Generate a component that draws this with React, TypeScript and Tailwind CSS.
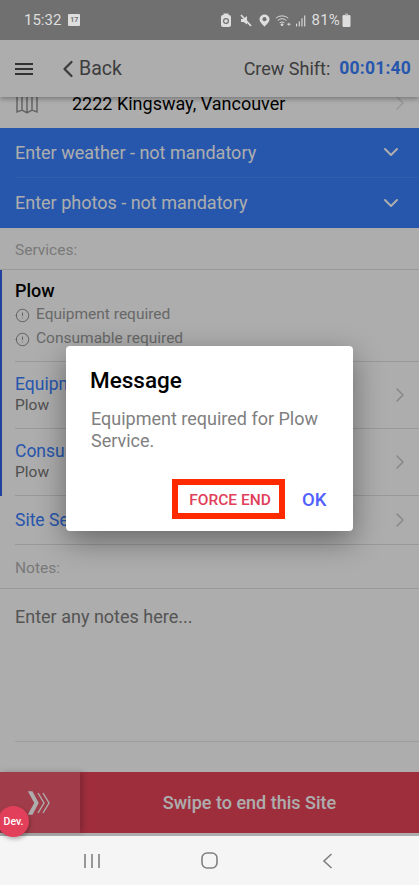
import { ChevronDown, ChevronLeft, ChevronRight, Info } from "lucide-react";

function StatusIcons() {
  return (
    <div className="flex items-center gap-[5px] text-[#dedede]">
      <svg width="10" height="14" viewBox="0 0 10 14"><rect x="0" y="2" width="10" height="12" rx="2" fill="#dedede" /><rect x="2.5" y="0.5" width="5" height="3" fill="#dedede" /><circle cx="5" cy="8" r="2.4" fill="none" stroke="#707070" strokeWidth="1.2" /></svg>
      <svg width="12" height="13" viewBox="0 0 12 13" className="ml-[4px]"><path d="M1 5h2.5L7 2v8.5L3.5 8H1z" fill="#dedede" /><path d="M1 1l10 11" stroke="#dedede" strokeWidth="1.8" /></svg>
      <svg width="11" height="13" viewBox="0 0 12 14" className="ml-[2px]"><path d="M6 0.5a5.5 5 0 0 1 5.5 5c0 3.4-5.5 8-5.5 8s-5.5-4.6-5.5-8a5.5 5 0 0 1 5.5-5z" fill="#dedede" /><circle cx="6" cy="5.5" r="2.2" fill="#707070" /></svg>
      <svg width="16" height="14" viewBox="0 0 17 14" fill="none" stroke="#dedede" strokeWidth="1"><path d="M1 5a10 10 0 0 1 13 0M3 7.5a7 7 0 0 1 9 0M5 10a4 4 0 0 1 5 0" /><circle cx="7.5" cy="12" r="1" fill="#dedede" /><path d="M13 11.5h3.5M14.8 10v3" /></svg>
      <svg width="10" height="13" viewBox="0 0 11 13" fill="#dedede"><rect x="0" y="10" width="1.2" height="3" /><rect x="3" y="7.5" width="1.2" height="5.5" /><rect x="6" y="4" width="1.2" height="9" /><rect x="9" y="1" width="1.2" height="12" /></svg>
      <span className="ml-[1px] text-[15px] leading-none tracking-[0.2px]">81%</span>
      <svg width="9" height="14" viewBox="0 0 9 14" className="-ml-[3px]"><rect x="0.5" y="2" width="8" height="12" rx="1.2" fill="#dedede" /><rect x="3" y="0.5" width="3" height="2" fill="#b0b0b0" /></svg>
    </div>
  );
}

function LinkRow({ title, sub, h }: { title: string; sub?: string; h: string }) {
  return (
    <div className={`flex ${h} items-center justify-between border-b border-[#e2e2e2] pr-[7px]`}>
      <div className={`leading-[21px] ${sub ? "" : "pt-[1px]"}`}>
        <div className="text-[17.5px] text-[#3880ff]">{title}</div>
        {sub && <div className="text-[15.5px] text-[#767676]">{sub}</div>}
      </div>
      <ChevronRight size={24} strokeWidth={1.5} className="text-[#c8c8c8]" />
    </div>
  );
}

function Req({ text }: { text: string }) {
  return (
    <div className="flex h-[24px] items-center gap-[6px] text-[15.5px] text-[#9a9a9a]">
      <Info size={15} strokeWidth={1.5} className="rotate-180 text-[#8a8a8a]" />
      <span>{text}</span>
    </div>
  );
}

function BlueRow({ text, border }: { text: string; border?: boolean }) {
  return (
    <div className="pl-[15px]">
      <div className={`flex h-[50px] items-center justify-between pb-[1px] pr-[16px] ${border ? "border-b border-[#4a8cff]" : ""}`}>
        <span className="text-[18px] text-white">{text}</span>
        <ChevronDown size={24} strokeWidth={2} className="text-white" />
      </div>
    </div>
  );
}

export default function App() {
  return (
    <div className="relative flex h-[885px] w-[419px] flex-col overflow-hidden bg-[#f5f5f5] font-['Roboto',sans-serif]">
      <div className="flex h-[836px] flex-col bg-white">
        <div className="relative z-30 flex h-[40px] items-center justify-between bg-[#707070] pl-[24px] pr-[68px]">
          <div className="flex items-center gap-[7px]">
            <span className="text-[15px] text-[#dedede]">15:32</span>
            <div className="flex h-[12px] w-[12px] items-center justify-center rounded-[1px] bg-[#dedede] text-[7px] font-bold leading-none text-[#707070]">17</div>
          </div>
          <StatusIcons />
        </div>
        <div className="z-10 flex h-[57px] items-center bg-white pl-[15px] pr-[8px] shadow-[0_2px_5px_rgba(0,0,0,0.3)]">
          <svg width="18" height="14" viewBox="0 0 18 14" stroke="#4a4a4a" strokeWidth="2"><path d="M0 2h18M0 7h18M0 12h18" /></svg>
          <ChevronLeft size={28} strokeWidth={2} className="ml-[21px] text-[#5a5a5a]" />
          <span className="-ml-[3px] text-[19.5px] text-[#5a5a5a]">Back</span>
          <span className="ml-auto text-[18px] text-[#5a5a5a]">Crew Shift:</span>
          <span className="ml-[9px] text-[17.5px] font-bold tracking-[0.2px] text-[#3880ff]">00:01:40</span>
        </div>
        <div className="flex h-[31px] items-center pb-[19px] pl-[16px] pr-[7px]">
          <svg width="22" height="24" viewBox="0 0 22 24" fill="none" stroke="#969696" strokeWidth="1.5" className="shrink-0"><path d="M1 2v19l5-2 5 3 5-3 5 2V2M1 2l5 2 5-2 5 2 5-2M6 4v15M11 2v20M16 4v15" /></svg>
          <span className="ml-[34px] text-[18px] text-black">2222 Kingsway, Vancouver</span>
          <ChevronRight size={24} strokeWidth={1.5} className="ml-auto text-[#dedede]" />
        </div>
        <div className="bg-[#3880ff]">
          <BlueRow text="Enter weather - not mandatory" border />
          <BlueRow text="Enter photos - not mandatory" />
        </div>
        <div className="flex h-[42px] items-center border-b border-[#e2e2e2] pl-[15px] pt-[5px] text-[15.5px] text-[#b3b3b3]">Services:</div>
        <div className="border-l-[2px] border-[#3060e8] pl-[13px]">
          <div className="h-[92px] border-b border-[#e2e2e2] pt-[9px]">
            <div className="mb-[1px] text-[18px] font-medium leading-[23px] text-black">Plow</div>
            <Req text="Equipment required" />
            <Req text="Consumable required" />
          </div>
          <LinkRow title="Equipment" sub="Plow" h="h-[67px]" />
          <LinkRow title="Consumable" sub="Plow" h="h-[67px]" />
        </div>
        <div className="pl-[15px]">
          <LinkRow title="Site Services" h="h-[49px]" />
        </div>
        <div className="flex h-[44px] items-center border-b border-[#e2e2e2] pl-[15px] pt-[4px] text-[15.5px] text-[#b3b3b3]">Notes:</div>
        <div className="ml-[15px] h-[153px] border-b border-[#e8e8e8] pt-[17px] text-[18px] leading-[21px] text-[#7d7d7d]">Enter any notes here...</div>
        <div className="flex-1" />
        <div className="flex h-[61px] bg-[#eb445a]">
          <div className="flex w-[80px] items-center justify-center bg-[#ed5a6d] shadow-[3px_0_6px_rgba(0,0,0,0.2)]">
            <svg width="24" height="24" viewBox="0 0 24 24" fill="none" stroke="#ffffff" strokeWidth="1.4"><path d="M1 1l6 11-6 11h3l6-11L4 1z" fill="#ffffff" /><path d="M10 2l6 10-6 10M15 2l6 10-6 10" /></svg>
          </div>
          <div className="flex flex-1 items-center justify-center text-[18px] font-medium text-white">Swipe to end this Site</div>
        </div>
        <div className="h-[3px]" />
      </div>

      <div className="absolute inset-x-0 top-0 z-20 flex h-[836px] justify-center bg-black/32 pt-[346px]">
        <div className="h-[185px] w-[287px] rounded-[4px] bg-white shadow-[0_10px_30px_rgba(0,0,0,0.4)]">
          <div className="pl-[24px] pt-[20px] text-[22.5px] font-medium leading-[28px] text-black">Message</div>
          <div className="mt-[14px] px-[25px] text-[18px] leading-[22px] text-[#808080]">Equipment required for Plow Service.</div>
          <div className="mt-[27px] flex items-center pl-[106px]">
            <div className="flex h-[40px] w-[113px] items-center justify-center border-[6px] border-[#ff2a00] pl-[3px] pt-[3px] text-[15.5px] font-medium text-[#e0405a]">FORCE END</div>
            <div className="ml-[17px] mt-[3px] text-[18.5px] font-medium text-[#5260ff]">OK</div>
          </div>
        </div>
      </div>

      <div className="absolute left-[-2px] top-[806px] z-30 flex h-[31px] w-[31px] items-center justify-center rounded-full bg-[#e2405a] text-[10.5px] font-medium text-white shadow-[1px_2px_4px_rgba(0,0,0,0.3)]">Dev.</div>

      <div className="flex h-[49px] items-center bg-[#f5f5f5]">
        <div className="flex w-full items-center justify-between pl-[84px] pr-[86px]">
          <svg width="16" height="16" viewBox="0 0 16 16" stroke="#808080" strokeWidth="1.6"><path d="M1 1v14M8 1v14M15 1v14" /></svg>
          <svg width="17" height="17" viewBox="0 0 17 17" fill="none" stroke="#808080" strokeWidth="1.6" className="-ml-[3px]"><rect x="1" y="1" width="15" height="15" rx="5" /></svg>
          <svg width="11" height="16" viewBox="0 0 11 16" fill="none" stroke="#808080" strokeWidth="1.6"><path d="M9.5 1L2 8l7.5 7" /></svg>
        </div>
      </div>
    </div>
  );
}
